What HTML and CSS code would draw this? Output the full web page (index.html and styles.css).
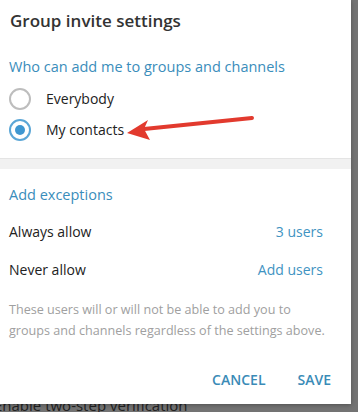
FILE: index.html
```html
<!DOCTYPE html>
<html lang="en">

<head>
  <meta charset="UTF-8">
  <meta name="viewport" content="width=device-width, initial-scale=1.0">
  <title>Group invite settings</title>
  <link rel="stylesheet" href="styles.css">
</head>

<body>
  <div class="dialog">
    <h1 class="dialog__title">Group invite settings</h1>

    <div class="section">
      <h2 class="section__title">Who can add me to groups and channels</h2>
      <label class="radio">
        <input type="radio" name="invite" value="everybody" />
        <span class="radio__mark"></span>
        Everybody
      </label>
      <label class="radio">
        <input type="radio" name="invite" value="contacts" checked />
        <span class="radio__mark"></span>
        My contacts
      </label>
    </div>

    <div class="divider"></div>

    <div class="section section--exceptions">
      <h2 class="section__title">Add exceptions</h2>
      <div class="row">
        <span>Always allow</span>
        <a class="row__link">3 users</a>
      </div>
      <div class="row">
        <span>Never allow</span>
        <a class="row__link">Add users</a>
      </div>
      <p class="note">These users will or will not be able to add you to<br>groups and channels regardless of the settings above.</p>
    </div>

    <div class="buttons">
      <button>CANCEL</button>
      <button>SAVE</button>
    </div>

    <!-- red marker somebody drew on the screenshot -->
    <svg class="marker" width="260" height="150" viewBox="0 0 260 150">
      <path d="M252 118 L144 129" stroke="#e23a2e" stroke-width="4" stroke-linecap="round" fill="none" />
      <path d="M127 133 L148 120 L144 129 L150 140 Z" fill="#e23a2e" />
    </svg>
  </div>

  <p class="behind">Enable two-step verification</p>
</body>

</html>
```

FILE: styles.css
```css
* {
  box-sizing: border-box;
}

body {
  margin: 0;
  background-color: #737373;
  font-family: 'Open Sans', 'Noto Sans', sans-serif;
  overflow: hidden;
}

.dialog {
  position: relative;
  z-index: 1;
  width: 351px;
  height: 404px;
  background-color: white;
  box-shadow: 0 1px 4px rgba(0, 0, 0, 0.3);
}

.dialog__title {
  margin: 0;
  padding: 9px 10px 0;
  font-size: 17px;
  font-weight: 600;
  line-height: 24px;
  color: #333;
}

.section {
  padding: 0 9px;
}

.section__title {
  margin: 0;
  padding-top: 23px;
  font-size: 14.5px;
  font-weight: normal;
  line-height: 22px;
  color: #3a8dbb;
}

.radio {
  display: flex;
  align-items: center;
  gap: 15px;
  height: 31px;
  font-size: 14px;
  color: #222;
  cursor: pointer;
}

.radio:first-of-type {
  margin-top: 5px;
}

.radio input {
  display: none;
}

.radio__mark {
  width: 22px;
  height: 22px;
  border: 2px solid #bdbdbd;
  border-radius: 50%;
  display: flex;
  align-items: center;
  justify-content: center;
}

.radio input:checked + .radio__mark {
  border-color: #5ba6d6;
}

.radio input:checked + .radio__mark::after {
  content: '';
  width: 10px;
  height: 10px;
  border-radius: 50%;
  background-color: #3f97d1;
}

.divider {
  margin-top: 13px;
  height: 11px;
  background-color: #f1f1f1;
  border-top: 1px solid #e4e4e4;
}

.section--exceptions .section__title {
  padding-top: 15px;
}

.row {
  display: flex;
  justify-content: space-between;
  align-items: center;
  height: 38px;
  padding-right: 19px;
  font-size: 14px;
  color: #222;
}

.row:first-of-type {
  margin-top: 6px;
}

.row__link {
  color: #3f93c2;
}

.note {
  margin: 11px 0 0;
  font-size: 12.6px;
  line-height: 21px;
  white-space: nowrap;
  color: #a0a0a0;
}

.buttons {
  display: flex;
  justify-content: flex-end;
  gap: 32px;
  padding: 29px 20px 0;
}

.buttons button {
  padding: 0;
  border: none;
  background: none;
  font-family: inherit;
  font-size: 14px;
  font-weight: 600;
  color: #3a8bb7;
  cursor: pointer;
}

.marker {
  position: absolute;
  left: 0;
  top: 0;
  pointer-events: none;
}

.behind {
  margin: -9px 0 0;
  text-indent: -6px;
  font-size: 15px;
  color: #222;
}
```
